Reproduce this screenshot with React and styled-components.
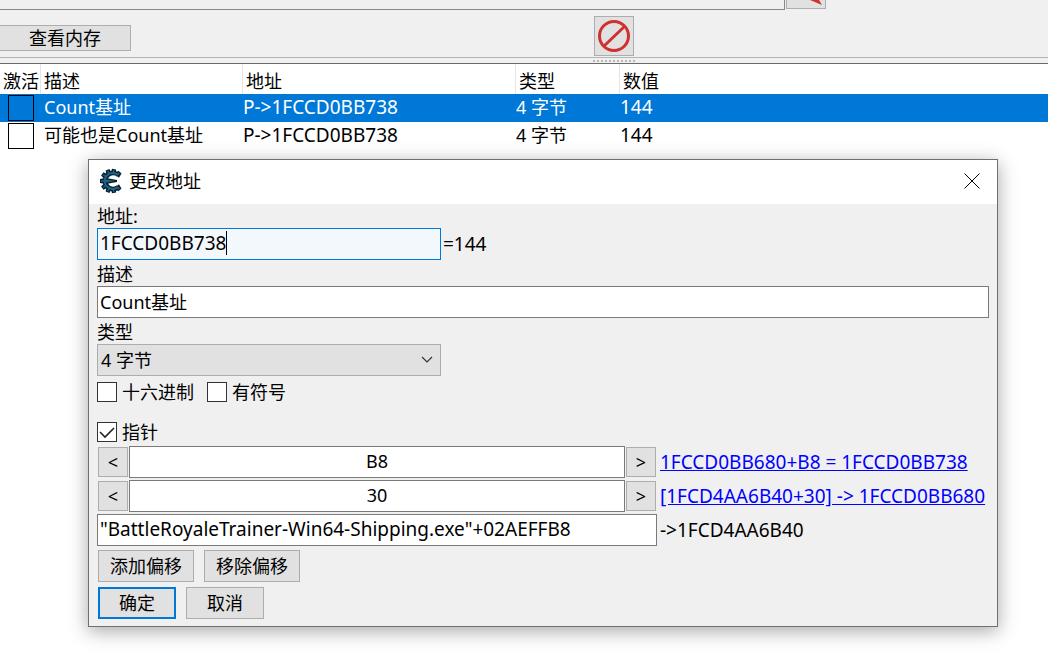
import React, { useState } from "react";
import styled, { createGlobalStyle } from "styled-components";

const records = [
    { id: 1, name: "Count基址", address: "P->1FCCD0BB738", type: "4 字节", value: "144" },
    { id: 2, name: "可能也是Count基址", address: "P->1FCCD0BB738", type: "4 字节", value: "144" },
];

const teeth = [48, 80, 112, 144, 180, 216, 248, 280, 312];

function EngineLogo() {
    return (
        <svg width="24" height="26" viewBox="-12 -13 24 26" aria-hidden="true">
            {teeth.map((angle) => (
                <path key={angle} d="M7 -3 L12 -2 V2 L7 3 Z" fill="#0b1f2b" transform={`rotate(${angle})`} />
            ))}
            <path d="M6.500 -6 A8 8 0 1 0 6.500 6" fill="none" stroke="#0b1f2b" strokeWidth="4.500" />
            <path d="M-11 0 L-6 -3 L5 -1 V1 L-6 3 Z" fill="#0b1f2b" />
            <path d="M6 -6 A8 8 0 1 0 6 6" fill="none" stroke="#1b6488" strokeWidth="2" />
            {teeth.map((angle) => (
                <path key={angle} d="M8 0 H11" stroke="#1b6488" strokeWidth="1.500" transform={`rotate(${angle})`} />
            ))}
            <path d="M-10 0 L-6 -1.500 L3 0 L-6 1.500 Z" fill="#1b6488" />
        </svg>
    );
}

export default function App() {
    const [selected, setSelected] = useState(1);
    const [address, setAddress] = useState("1FCCD0BB738");
    const [description, setDescription] = useState("Count基址");
    const [offsets, setOffsets] = useState(["B8", "30"]);
    const [base, setBase] = useState('"BattleRoyaleTrainer-Win64-Shipping.exe"+02AEFFB8');
    const results = ["1FCCD0BB680+B8 = 1FCCD0BB738", "[1FCD4AA6B40+30] -> 1FCCD0BB680"];

    const changeOffset = (index, value) => {
        setOffsets(offsets.map((item, i) => (i === index ? value : item)));
    };

    return (
        <StyledWindow>
            <GlobalStyle />
            <StyledTopStrip>
                <StyledScanList />
                <StyledArrowButton aria-label="Add to list">
                    <svg width="38" height="8" viewBox="0 0 38 8">
                        <path d="M23 0 L35 5 L32 0 Z" fill="#d03030" />
                    </svg>
                </StyledArrowButton>
            </StyledTopStrip>
            <StyledToolbar>
                <StyledMemoryButton>查看内存</StyledMemoryButton>
                <StyledStopButton aria-label="Stop">
                    <svg width="34" height="34" viewBox="0 0 34 34">
                        <circle cx="17" cy="17" r="14.500" fill="none" stroke="#d03030" strokeWidth="3" />
                        <path d="M7 27 L28 7" stroke="#d03030" strokeWidth="3" />
                    </svg>
                </StyledStopButton>
            </StyledToolbar>
            <StyledSplitter>
                <StyledGrip />
            </StyledSplitter>

            <StyledTable>
                <colgroup>
                    <col width="41" />
                    <col width="202" />
                    <col width="273" />
                    <col width="104" />
                    <col />
                </colgroup>
                <thead>
                    <tr>
                        <StyledHead>激活</StyledHead>
                        <StyledHead>描述</StyledHead>
                        <StyledHead>地址</StyledHead>
                        <StyledHead>类型</StyledHead>
                        <StyledHead>数值</StyledHead>
                    </tr>
                </thead>
                <tbody>
                    {records.map((record) => (
                        <StyledRow
                            key={record.id}
                            $selected={record.id === selected}
                            onClick={() => setSelected(record.id)}
                        >
                            <StyledBoxCell>
                                <StyledActiveBox type="checkbox" aria-label={record.name} />
                            </StyledBoxCell>
                            <StyledCell $pad={3}>{record.name}</StyledCell>
                            <StyledCell $code>{record.address}</StyledCell>
                            <StyledCell>{record.type}</StyledCell>
                            <StyledCell $code>{record.value}</StyledCell>
                        </StyledRow>
                    ))}
                </tbody>
            </StyledTable>

            <StyledDialog role="dialog" aria-labelledby="dialog-title">
                <StyledTitleBar>
                    <EngineLogo />
                    <StyledTitle id="dialog-title">更改地址</StyledTitle>
                    <StyledCloseButton aria-label="Close">
                        <svg width="16" height="16" viewBox="0 0 16 16">
                            <path d="M0.500 0.500 L15.500 15.500 M15.500 0.500 L0.500 15.500" stroke="#000" />
                        </svg>
                    </StyledCloseButton>
                </StyledTitleBar>

                <StyledBody>
                    <StyledLabel htmlFor="address">地址:</StyledLabel>
                    <StyledLine>
                        <StyledAddressField>
                            <StyledInput
                                id="address"
                                $focused
                                $code
                                value={address}
                                onChange={(e) => setAddress(e.target.value)}
                            />
                            <StyledCaret aria-hidden="true">{address}</StyledCaret>
                        </StyledAddressField>
                        <StyledValue>=144</StyledValue>
                    </StyledLine>

                    <StyledLabel htmlFor="description">描述</StyledLabel>
                    <StyledInput
                        id="description"
                        value={description}
                        onChange={(e) => setDescription(e.target.value)}
                    />

                    <StyledLabel htmlFor="type">类型</StyledLabel>
                    <StyledSelectWrap>
                        <StyledSelect id="type" defaultValue="4">
                            <option value="4">4 字节</option>
                        </StyledSelect>
                        <StyledChevron width="12" height="8" viewBox="0 0 12 8">
                            <path d="M1 1 L6 6 L11 1" fill="none" stroke="#333" strokeWidth="1.200" />
                        </StyledChevron>
                    </StyledSelectWrap>

                    <StyledCheckRow>
                        <StyledCheckLabel>
                            <StyledCheck type="checkbox" />
                            十六进制
                        </StyledCheckLabel>
                        <StyledCheckLabel>
                            <StyledCheck type="checkbox" />
                            有符号
                        </StyledCheckLabel>
                    </StyledCheckRow>
                    <StyledPointerRow>
                        <StyledCheckLabel>
                            <StyledCheck type="checkbox" defaultChecked />
                            指针
                        </StyledCheckLabel>
                    </StyledPointerRow>

                    <StyledPointerGrid>
                        {offsets.map((offset, index) => (
                            <React.Fragment key={index}>
                                <StyledOffset>
                                    <StyledStepButton>&lt;</StyledStepButton>
                                    <StyledInput
                                        $center
                                        aria-label={`Offset ${index + 1}`}
                                        value={offset}
                                        onChange={(e) => changeOffset(index, e.target.value)}
                                    />
                                    <StyledStepButton>&gt;</StyledStepButton>
                                </StyledOffset>
                                <StyledLink href="#">{results[index]}</StyledLink>
                            </React.Fragment>
                        ))}
                        <StyledInput
                            $code
                            aria-label="Base address"
                            value={base}
                            onChange={(e) => setBase(e.target.value)}
                        />
                        <StyledBaseValue>-&gt;1FCD4AA6B40</StyledBaseValue>
                    </StyledPointerGrid>

                    <StyledButtonRow>
                        <StyledButton $width={96}>添加偏移</StyledButton>
                        <StyledButton $width={96}>移除偏移</StyledButton>
                    </StyledButtonRow>
                    <StyledButtonRow>
                        <StyledButton $width={78} $primary>确定</StyledButton>
                        <StyledButton $width={78}>取消</StyledButton>
                    </StyledButtonRow>
                </StyledBody>
            </StyledDialog>
        </StyledWindow>
    );
}

const GlobalStyle = createGlobalStyle`
  * {
    box-sizing: border-box;
  }
  body {
    margin: 0;
    background: white;
  }
  body, button, input, select {
    font-family: "Noto Sans", "Noto Sans CJK SC", sans-serif;
    font-size: 18px;
    line-height: 24px;
    color: black;
  }
`;

const StyledWindow = styled.div`
  position: relative;
  min-height: 100vh;
`;

const StyledTopStrip = styled.div`
  display: flex;
  align-items: flex-start;
  gap: 1px;
  height: 16px;
  padding-right: 222px;
  background: #f0f0f0;
`;

const StyledScanList = styled.div`
  flex: 1;
  height: 10px;
  border: solid #828790;
  border-width: 0 1px 1px 0;
`;

const StyledArrowButton = styled.button`
  display: flex;
  width: 40px;
  height: 9px;
  padding: 0;
  border: solid #adadad;
  border-width: 0 1px 1px 1px;
  background: #e1e1e1;
`;

const StyledToolbar = styled.div`
  display: grid;
  grid-template-columns: 131px 463fr 40px 414fr;
  align-items: start;
  height: 41px;
  background: #f0f0f0;
`;

const StyledMemoryButton = styled.button`
  height: 26px;
  margin-top: 9px;
  padding: 0;
  border: 1px solid #adadad;
  border-left: none;
  background: #e1e1e1;
`;

const StyledStopButton = styled.button`
  grid-column: 3;
  display: flex;
  align-items: center;
  justify-content: center;
  height: 40px;
  padding: 0;
  border: 1px solid #adadad;
  background: #e1e1e1;
`;

const StyledSplitter = styled.div`
  display: grid;
  grid-template-columns: 131px 462fr 42px 413fr;
  align-items: center;
  height: 7px;
  border-top: 1px solid #b4b4b4;
  border-bottom: 1px solid #696969;
  background: #f0f0f0;
`;

const StyledGrip = styled.div`
  grid-column: 3;
  height: 2px;
  background: repeating-linear-gradient(90deg, #b8b8b8 0 2px, #f0f0f0 2px 4px);
`;

const StyledTable = styled.table`
  width: 100%;
  table-layout: fixed;
  border-collapse: collapse;
`;

const StyledHead = styled.th`
  height: 30px;
  padding: 3px 0 0 3px;
  font-weight: normal;
  text-align: left;
  white-space: nowrap;
  box-shadow: inset -1px 0 #e5e5e5;

  &:last-child {
    box-shadow: none;
  }
`;

const StyledRow = styled.tr`
  background: ${(props) => (props.$selected ? "#0078d7" : "white")};
  color: ${(props) => (props.$selected ? "white" : "black")};
`;

const StyledCell = styled.td`
  height: 28px;
  padding: 0 0 2px ${(props) => props.$pad || 0}px;
  font-size: ${(props) => (props.$code ? "19px" : "18px")};
  white-space: nowrap;
`;

const StyledBoxCell = styled.td`
  height: 28px;
  padding: 0 0 0 8px;
`;

const StyledActiveBox = styled.input`
  appearance: none;
  display: block;
  width: 26px;
  height: 26px;
  margin: 0;
  border: 1px solid black;
`;

const StyledDialog = styled.section`
  position: absolute;
  top: 159px;
  left: 88px;
  right: 50px;
  border: 1px solid #707070;
  background: #f0f0f0;
  box-shadow: 0 4px 18px rgba(0, 0, 0, 0.35);
`;

const StyledTitleBar = styled.header`
  display: flex;
  align-items: center;
  height: 44px;
  padding: 0 17px 2px 11px;
  background: white;
`;

const StyledTitle = styled.h1`
  flex: 1;
  margin: 0 0 0 5px;
  font-size: 18px;
  font-weight: normal;
`;

const StyledCloseButton = styled.button`
  display: flex;
  padding: 0;
  border: none;
  background: none;
`;

const StyledBody = styled.div`
  display: flex;
  flex-direction: column;
  padding: 0 8px 7px;
`;

const StyledLabel = styled.label`
  align-self: flex-start;

  &:not(:first-child) {
    margin-top: 2px;
  }
`;

const StyledLine = styled.div`
  display: flex;
  align-items: center;
`;

const StyledAddressField = styled.div`
  position: relative;
  width: 344px;
`;

const StyledInput = styled.input`
  width: 100%;
  min-width: 0;
  height: 32px;
  padding: 0 2px 2px;
  border: 1px solid ${(props) => (props.$focused ? "#0078d7" : "#7a7a7a")};
  background: ${(props) => (props.$focused ? "#f3f8fd" : "white")};
  font-size: ${(props) => (props.$code ? "19px" : "18px")};
  text-align: ${(props) => (props.$center ? "center" : "left")};
  outline: none;
`;

/* hidden copy of the text, its right border is the caret */
const StyledCaret = styled.span`
  position: absolute;
  top: 3px;
  left: 3px;
  height: 24px;
  border-right: 1px solid black;
  font-size: 19px;
  color: transparent;
  pointer-events: none;
`;

const StyledValue = styled.output`
  margin-left: 2px;
  font-size: 19px;
`;

const StyledSelectWrap = styled.div`
  position: relative;
  width: 344px;
`;

const StyledSelect = styled.select`
  appearance: none;
  display: block;
  width: 100%;
  height: 32px;
  padding: 0 3px;
  border: 1px solid #adadad;
  border-radius: 0;
  background: #e1e1e1;
`;

const StyledChevron = styled.svg`
  position: absolute;
  top: 12px;
  right: 8px;
  pointer-events: none;
`;

const StyledCheckRow = styled.div`
  display: flex;
  gap: 13px;
  margin-top: 4px;
`;

const StyledPointerRow = styled.div`
  display: flex;
  margin: 16px 0 2px;
`;

const StyledCheckLabel = styled.label`
  display: flex;
  align-items: center;
  gap: 5px;
`;

const StyledCheck = styled.input`
  appearance: none;
  width: 20px;
  height: 20px;
  margin: 0;
  border: 1px solid #333;
  background: white;

  &:checked {
    background: white url("data:image/svg+xml,%3Csvg xmlns='http://www.w3.org/2000/svg' viewBox='0 0 18 18'%3E%3Cpath d='M2 9 L7 14 L16 5' fill='none' stroke='%23222' stroke-width='1.600'/%3E%3C/svg%3E");
  }
`;

const StyledPointerGrid = styled.div`
  display: grid;
  grid-template-columns: minmax(0, 560fr) minmax(0, 329fr);
  gap: 2px 3px;
  align-items: center;
  white-space: nowrap;
`;

const StyledOffset = styled.div`
  display: flex;
  align-items: center;
  gap: 1px;
  padding: 0 1px;
`;

const StyledStepButton = styled.button`
  flex: none;
  width: 30px;
  height: 30px;
  padding: 0;
  border: 1px solid #adadad;
  background: #e1e1e1;
`;

const StyledLink = styled.a`
  justify-self: start;
  font-size: 19px;
  color: #0000ff;
  text-decoration: underline;
`;

const StyledBaseValue = styled.output`
  font-size: 19px;
`;

const StyledButtonRow = styled.div`
  display: flex;
  gap: 10px;
  padding-left: 1px;
  margin-top: 4px;

  & + & {
    margin-top: 5px;
  }
`;

const StyledButton = styled.button`
  width: ${(props) => props.$width}px;
  height: 32px;
  padding: 0;
  border: ${(props) => (props.$primary ? "2px solid #0078d7" : "1px solid #adadad")};
  background: #e1e1e1;
`;
